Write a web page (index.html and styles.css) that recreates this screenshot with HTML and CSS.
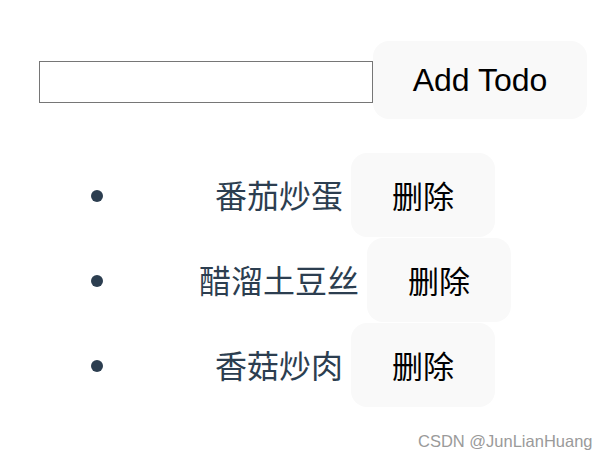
FILE: index.html
```html
<html>
<head>
    <title>Todo List</title>
    <link rel="stylesheet" href="styles.css">
</head>
<body>

<div id="app">

    <div class="add-row">
        <input class="todo-input" type="text" id="newTodo">
        <button class="add-btn">Add Todo</button>
    </div>

    <ul class="todo-list">
        <li>番茄炒蛋 <button class="del-btn">删除</button></li>
        <li>醋溜土豆丝 <button class="del-btn">删除</button></li>
        <li>香菇炒肉 <button class="del-btn">删除</button></li>
    </ul>

</div>

<div class="watermark">CSDN @JunLianHuang</div>

</body>
</html>
```

FILE: styles.css
```css
body
{
    font-family: "Liberation Sans", "Noto Sans CJK SC", sans-serif;
    color: #2c3e50;
    background-color: #fff;
    margin: 0;
}

#app
{
    width: 608px;
    height: 462px;
}

.add-row
{
    display: flex;
    align-items: center;
    padding: 41px 0 0 39px;
}

.todo-input
{
    width: 334px;
    height: 42px;
    box-sizing: border-box;
    border: 1px solid #767676;
    margin: 4px 0 0 0;
    padding: 0;
}

button
{
    background-color: #f9f9f9;
    color: #000;
    border: 1px solid transparent;
    border-radius: 16px;
    font-family: "Liberation Sans", "Noto Sans CJK SC", sans-serif;
    line-height: 1.5;
}

.add-btn
{
    font-size: 32px;
    height: 78px;
    width: 214px;
    padding: 0;
}

.todo-list
{
    margin: 33px 0 0 0;
    padding: 0 20px 0 122px;
    font-family: "Noto Sans CJK SC", sans-serif;
    font-size: 32px;
    text-align: center;
}

.todo-list li
{
    height: 85px;
    line-height: 84px;
}

.del-btn
{
    font-family: "Noto Sans CJK SC", sans-serif;
    font-size: 31px;
    width: 144px;
    height: 84px;
    padding: 0;
    margin-left: 1px;
}

.watermark
{
    position: absolute;
    left: 418px;
    top: 432px;
    font-size: 16.5px;
    color: #9a9a9a;
    font-family: "Liberation Sans", sans-serif;
}
```
